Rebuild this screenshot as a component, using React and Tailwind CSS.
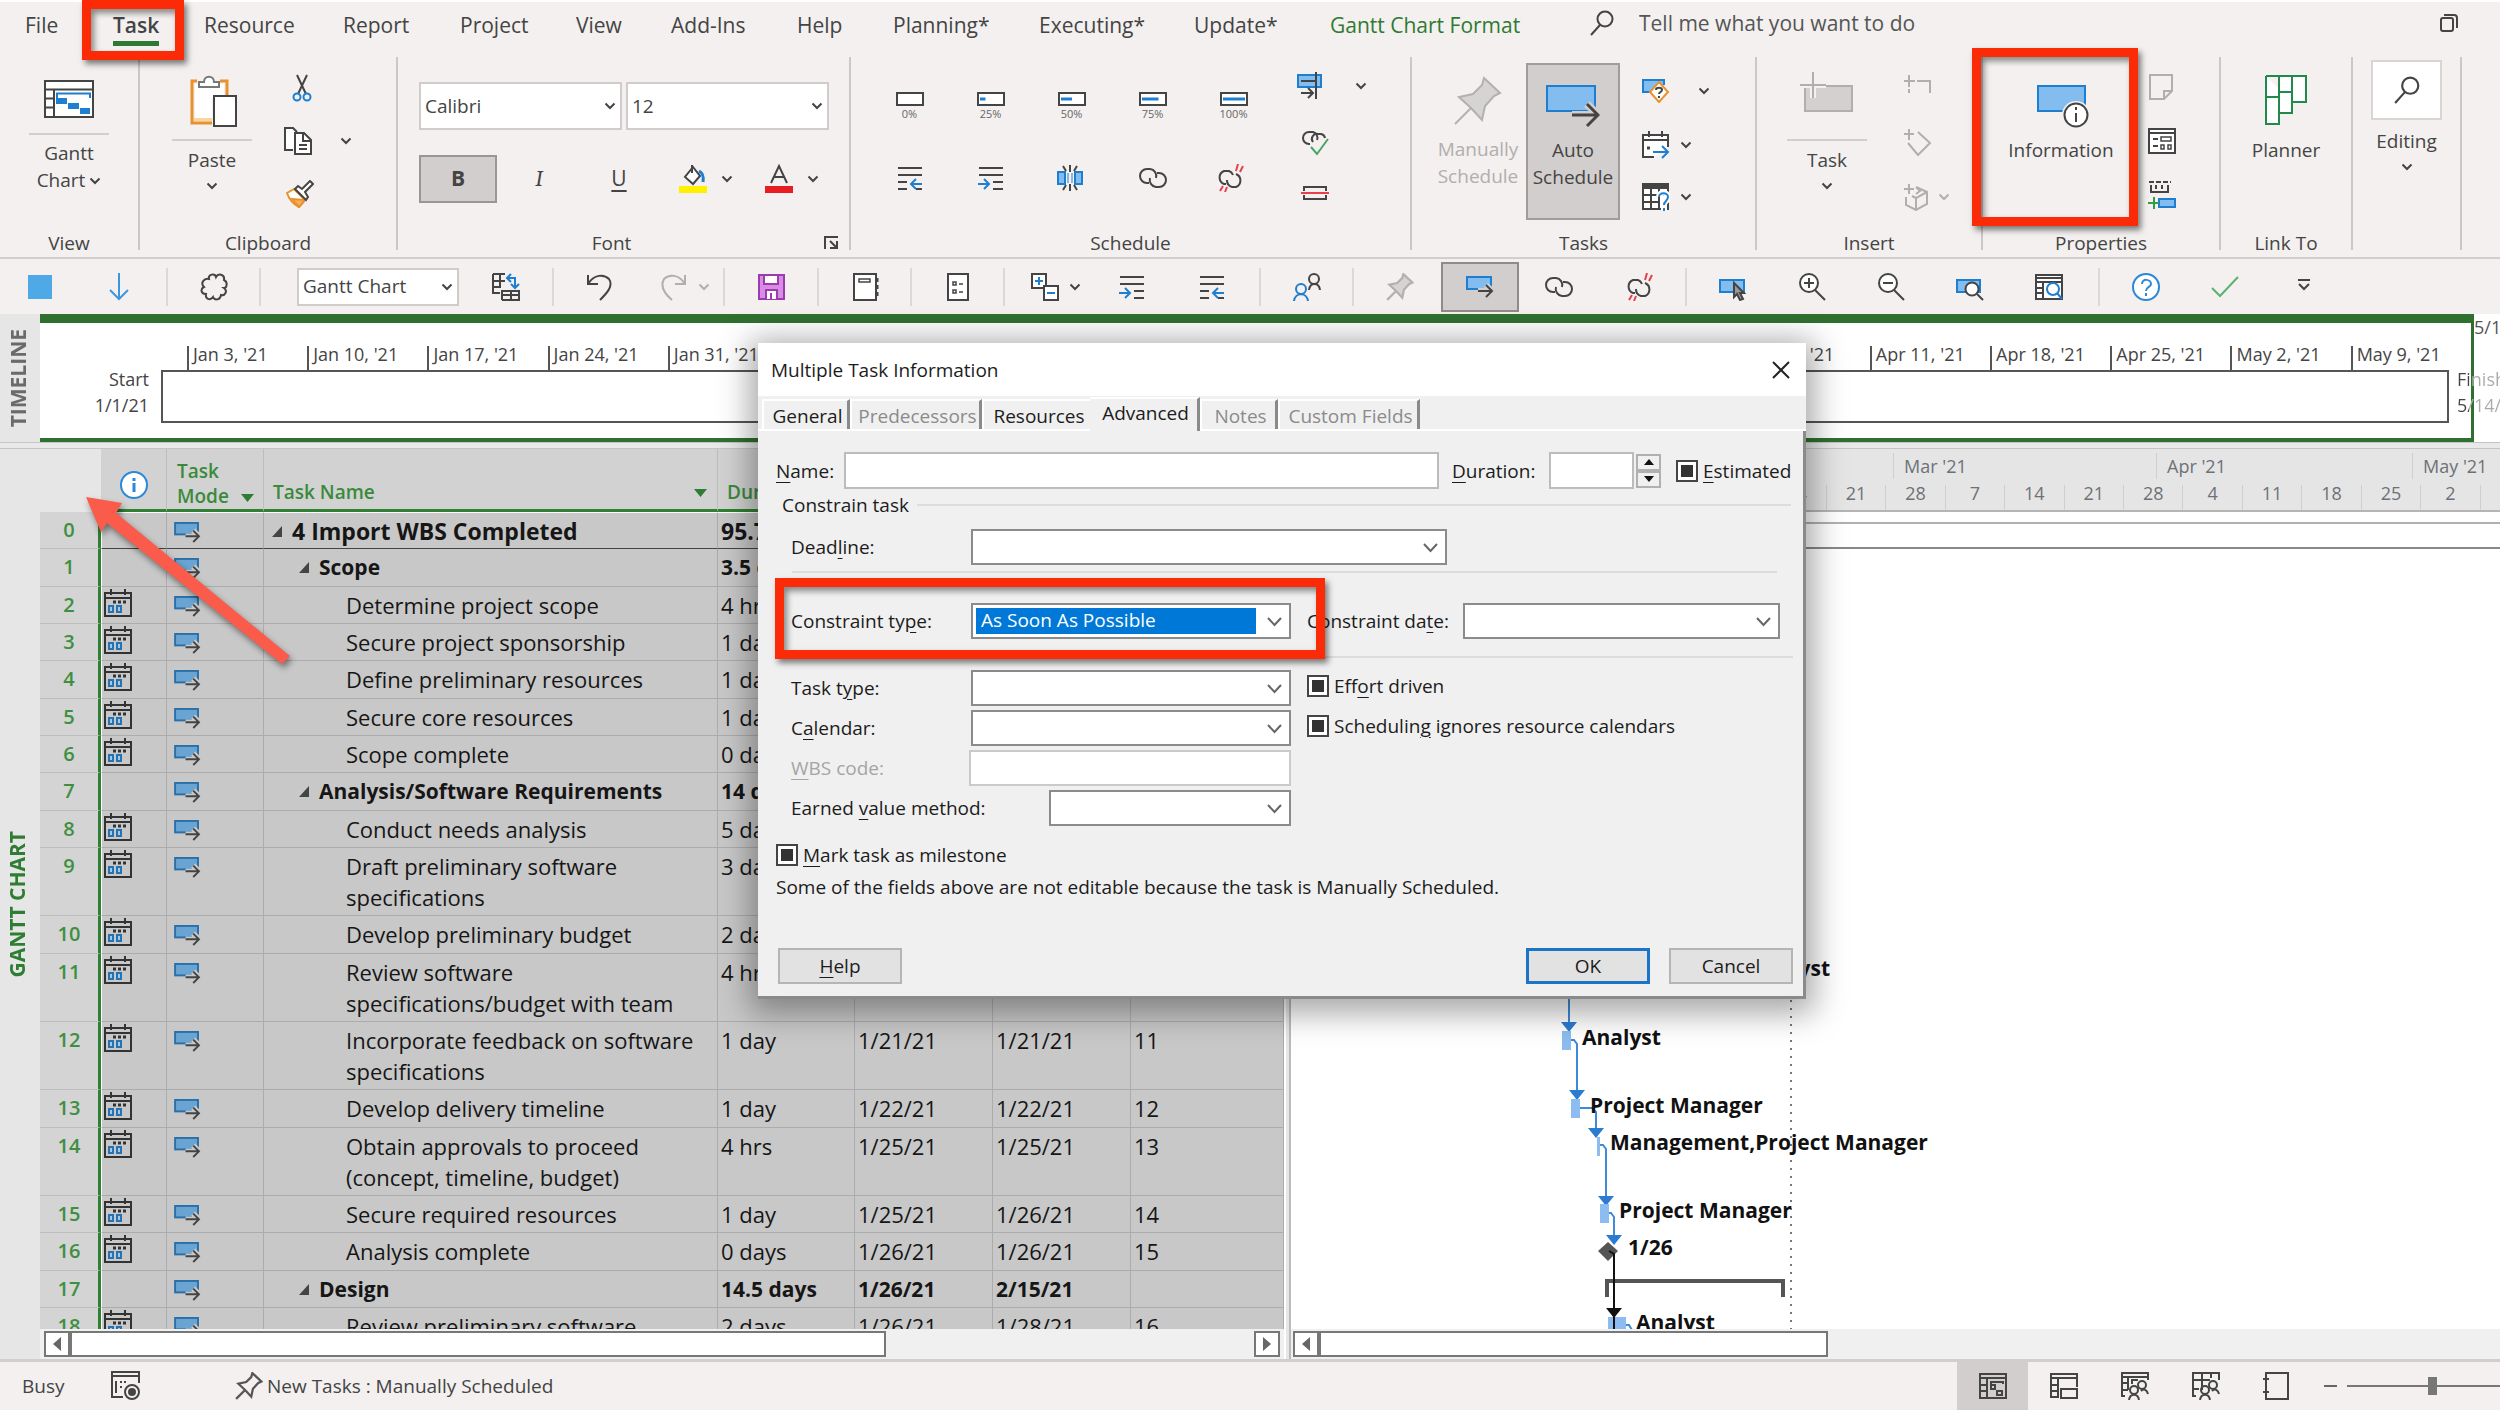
import React from "react";

const INK = "#444444";
const BLUE = "#1e7fd0";
const SKY = "#83bdf0";
const GREY = "#b1aead";

function Svg({ w = 28, h = 28, vb, children, stroke = INK, sw = 2, className = "" }) {
  return (
    <svg width={w} height={h} viewBox={vb || `0 0 ${w} ${h}`} fill="none" stroke={stroke} strokeWidth={sw} className={"shrink-0 " + className} aria-hidden="true">
      {children}
    </svg>
  );
}

const Chevron = ({ color = INK }) => (
  <Svg w={12} h={8} stroke={color} sw={2}><path d="M1.5 1.5 L6 6 L10.5 1.5" /></Svg>
);

/* ---------- ribbon icons ---------- */
const GanttIcon = () => (
  <Svg w={50} h={38}>
    <rect x="1" y="1" width="48" height="36" fill="#fff" />
    <path d="M1 9.500H49M10 10V37M1 18.500H10M1 27.500H10" />
    <path d="M13 18V13.500H46V18" stroke={BLUE} />
    <path d="M13 19h9v4h-9zM25 24h9v4h-9zM37 29h8v4h-8z" stroke={BLUE} fill={BLUE} />
  </Svg>
);
const PasteIcon = () => (
  <Svg w={48} h={52}>
    <path d="M7 6H2V48H22M30 6H37V20" stroke="#e8912d" strokeWidth="3" />
    <path d="M5 9V45H22V22H34V9Z" fill="#fff" stroke="none" />
    <path d="M4 43H22V46H4Z" fill="#fbd49b" stroke="none" />
    <path d="M9 12V7H14C14 0 24 0 24 7H29V12Z" fill="#fff" stroke="#777" />
    <rect x="24" y="21" width="22" height="30" fill="#fff" />
  </Svg>
);
const ScissorsIcon = () => (
  <Svg w={20} h={28}>
    <path d="M5 1L14 20M15 1L6 20" />
    <circle cx="5" cy="23" r="3.500" stroke={BLUE} /><circle cx="15" cy="23" r="3.500" stroke={BLUE} />
  </Svg>
);
const CopyIcon = () => (
  <Svg>
    <path d="M9 23H1V1H9L13 5" fill="#fff" />
    <path d="M11 6H20L27 13V27H11Z" fill="#fff" /><path d="M19 6V14H27M15 18H23M15 22H23" />
  </Svg>
);
const PainterIcon = () => (
  <Svg w={28} h={28}>
    <path d="M8 9L1 13C3 19 7 24 13 27L19 20Z" stroke="#e8912d" fill="#fff" />
    <path d="M6 19L19 20L13 27Z" fill="#f3b25f" stroke="#e8912d" />
    <path d="M9 9L20 20L22 17L19 12L27 4L24 1L16 9L12 6Z" fill="#fff" />
  </Svg>
);
const BucketIcon = () => (
  <Svg w={28} h={30}>
    <path d="M13 1V9M14 3L6 13L14 20L21 12Z" fill="#fff" /><path d="M20 7C24 9 25 12 24 18" stroke={BLUE} strokeWidth="3" />
    <rect x="0" y="22" width="28" height="7" fill="#fff000" stroke="none" />
  </Svg>
);
const FontColorIcon = () => (
  <Svg w={28} h={30}>
    <path d="M6 19L14 2L22 19M9 13H19" />
    <rect x="0" y="22" width="28" height="7" fill="#e81c23" stroke="none" />
  </Svg>
);
const LauncherIcon = () => (
  <Svg w={15} h={14} sw={2}><path d="M1 13V1H14M6 5L13 12M13 5V12H6" /></Svg>
);
const PercentIcon = ({ pct }) => (
  <Svg w={28} h={14}>
    <rect x="1" y="1" width="26" height="12" fill="#fff" />
    {pct > 0 && <path d={`M3 7H${3 + (22 * pct) / 100}`} stroke={BLUE} strokeWidth="3" />}
  </Svg>
);
const OutdentIcon = () => (
  <Svg w={26} h={26}>
    <path d="M1 3H25M1 10H25M1 17H10M1 24H10M19 24H25" strokeWidth="2" />
    <path d="M25 19H14M19 14L14 19L19 24" stroke={BLUE} />
  </Svg>
);
const IndentIcon = () => (
  <Svg w={26} h={26}>
    <path d="M1 3H25M1 10H25M15 17H25M15 24H25" />
    <path d="M0 19H11M6 14L11 19L6 24" stroke={BLUE} />
  </Svg>
);
const SplitIcon = () => (
  <Svg w={26} h={26}>
    <path d="M1 7H8V19H1ZM18 7H25V19H18Z" fill={SKY} stroke={BLUE} />
    <path d="M13 0V7M13 19V26M6 1L9 6M20 1L17 6M6 25L9 20M20 25L17 20" />
    <path d="M11 8V18M15 8V18" stroke={BLUE} strokeWidth="1" />
  </Svg>
);
const LinkIcon = () => (
  <Svg>
    <path d="M10 19H8A7 7 0 0 1 8 5H11A7 7 0 0 1 17 14" />
    <path d="M18 9H20A7 7 0 0 1 20 23H17A7 7 0 0 1 11 14" />
  </Svg>
);
const UnlinkIcon = () => (
  <Svg w={28} h={28}>
    <path d="M10 20H8A7 7 0 0 1 8 7H13A7 7 0 0 1 17 11" />
    <path d="M20 10A7 7 0 0 1 20 23H16A7 7 0 0 1 11 16" />
    <path d="M20 7L22 0M24 8L27 2M7 22L4 27M11 23L9 28" stroke="#e8404a" />
  </Svg>
);
const InspectLink = () => (
  <Svg w={28} h={26}>
    <path d="M9 14H8A6 6 0 0 1 8 2H12A6 6 0 0 1 16 10" /><path d="M12 12A5 5 0 0 1 17 4H20A5 5 0 0 1 24 8" />
    <path d="M10 17L16 24L27 9" stroke="#4aa564" strokeWidth="2" />
  </Svg>
);
const MarkTrack = () => (
  <Svg w={26} h={28}>
    <rect x="1" y="3" width="23" height="12" fill={SKY} stroke={BLUE} />
    <path d="M4 9H18M19 0V27M4 21H16M11 16L16 21L11 26" />
  </Svg>
);
const InactivateIcon = () => (
  <Svg w={28} h={14}>
    <path d="M3 5V1H25V5M3 9V13H25V9" /><path d="M0 7H28" stroke="#e8404a" />
  </Svg>
);
const PinIcon = ({ w = 50, h = 50, color = "#b3b0af", fill = "#d6d4d3" }) => (
  <Svg w={w} h={h} vb="0 0 50 50" stroke={color} sw={w > 40 ? 2 : 4}>
    <path d="M31 2L47 17L41 20L32 30L29 44L18 32L6 21L20 18L29 9Z" fill={fill} /><path d="M18 32L2 48" />
  </Svg>
);
const AutoIcon = () => (
  <Svg w={54} h={44}>
    <rect x="1" y="1" width="48" height="25" fill={SKY} stroke={BLUE} />
    <path d="M26 30H51M41 19L52 30L41 41" stroke="#d2cecd" strokeWidth="8" />
    <path d="M26 30H51M41 19L52 30L41 41" strokeWidth="3" />
  </Svg>
);
const AutoSmall = ({ w = 28, bg = "#d2cecd", fill = SKY, edge = BLUE }) => (
  <Svg w={w} h={w - 6} vb="0 0 28 22">
    <rect x="1" y="1" width="24" height="12" fill={fill} stroke={edge} />
    <path d="M12 15H26M20 9L26 15L20 21" stroke={bg} strokeWidth="6" />
    <path d="M12 15H26M20 9L26 15L20 21" />
  </Svg>
);
const InspectIcon = () => (
  <Svg w={28} h={24}>
    <path d="M22 6V1H1V13H10" fill={SKY} stroke={BLUE} />
    <path d="M17 3L26 13L17 23L8 13Z" fill="#fff" stroke="#e8912d" strokeWidth="2" />
    <path d="M14 11C14 8 20 8 20 11C20 13 17 13 17 15M17 17V19" />
  </Svg>
);
const MoveIcon = () => (
  <Svg w={28} h={28}>
    <path d="M12 26H1V4H26V16M1 9H26M7 0V6M20 0V6" fill="#fff" /><path d="M5 17H8" strokeWidth="3" />
    <path d="M11 21H26M20 15L26 21L20 27" stroke={BLUE} />
  </Svg>
);
const ModeIcon = () => (
  <Svg w={28} h={28}>
    <rect x="1" y="1" width="25" height="25" fill="#fff" /><path d="M1 3H26V5H1Z" />
    <path d="M1 12H26M1 19H18M9 6V26M17 6V26" />
    <path d="M17 14C17 8 26 9 26 14C26 18 22 18 22 22M22 25V28" stroke="#fff" strokeWidth="6" />
    <path d="M17 14C17 9 26 9 26 14C26 18 22 18 22 22M22 25V28" stroke={BLUE} />
  </Svg>
);
const InsertTaskIcon = () => (
  <Svg w={54} h={40} stroke={GREY}>
    <rect x="5" y="14" width="47" height="25" fill="#d3d0cf" />
    <path d="M13 0V26M0 13H26" stroke="#f3f0ef" strokeWidth="6" /><path d="M13 0V26M0 13H26" />
  </Svg>
);
const SummaryIcon = () => (<Svg w={28} h={20} stroke={GREY}><path d="M5 0V12M0 6H11M5 14V18M13 6H26V18" /></Svg>);
const MilestoneIcon = () => (<Svg w={28} h={28} stroke={GREY}><path d="M5 0V11M0 5H10M14 3L26 14L14 26L4 14" /></Svg>);
const DeliverableIcon = () => (<Svg w={28} h={28} stroke={GREY}><path d="M5 1V11M0 6H10M12 4L23 9V21L12 27L2 22V14M12 27V15L23 9M12 15L8 13M12 4L16 8L12 11" /></Svg>);
const InfoTaskIcon = () => (
  <Svg w={52} h={44}>
    <rect x="1" y="1" width="47" height="25" fill={SKY} stroke={BLUE} />
    <circle cx="39" cy="30" r="14" fill="#f3f0ef" stroke="none" />
    <circle cx="39" cy="30" r="11.500" fill="#fff" /><path d="M39 28V37M39 22V25" />
  </Svg>
);
const NoteIcon = () => (<Svg w={28} h={26} stroke={GREY}><path d="M2 1H24V17L16 25H2ZM24 17H16V25" /></Svg>);
const DetailsIcon = () => (<Svg w={28} h={26}><rect x="1" y="1" width="26" height="24" fill="#fff" /><path d="M1 5H27M5 11H10M5 18H10" /><path d="M13 9H23V13H13ZM13 17H16V21H13ZM20 17H23V21H20Z" strokeWidth="1.500" /></Svg>);
const AddTimelineIcon = () => (
  <Svg w={28} h={28}>
    <path d="M1 1H23" strokeDasharray="5 2" /><path d="M3 4V11H20V4M8 4V8M14 4V8" />
    <rect x="11" y="18" width="16" height="8" fill={SKY} stroke={BLUE} /><path d="M6 16V28M0 22H11" stroke="#2f9e44" />
  </Svg>
);
const PlannerIcon = () => (
  <Svg w={42} h={50} stroke="#1f8a4c">
    <path d="M1 1H41V27H27M1 1V49H14V1M14 17H27V38H14M27 1V38M1 22H14" fill="#fff" />
  </Svg>
);
const SearchIcon = ({ w = 26 }) => (
  <Svg w={w} h={w} vb="0 0 26 26"><circle cx="16" cy="9" r="7.500" /><path d="M11 15L2 25" /></Svg>
);

/* ---------- quick access icons ---------- */
const CloudIcon = () => (<Svg><path d="M9 6C8 1 15 0 16 4C18 0 25 1 24 7C28 9 27 15 24 15C28 18 25 23 21 22C20 28 14 27 13 24C10 28 5 26 6 21C1 21 0 16 4 14C0 10 4 5 9 6Z" strokeWidth="2" /></Svg>);
const ArrowDown = () => (<Svg stroke="#3b97dd"><path d="M14 0V26M5 17L14 26L23 17" strokeWidth="2" /></Svg>);
const SwitchIcon = () => (
  <Svg><path d="M1 1H13M1 1V20H8M1 8H13M1 14H9M8 1V14M10 27V18H27V27H10M19 17V27M10 22H27" />
    <path d="M16 5H23V14M19 1L15 5L19 9M19 11L23 15L27 11" stroke={BLUE} /></Svg>
);
const UndoIcon = () => (<Svg><path d="M2 2V11H12M2 11C8 1 18 1 23 6C28 13 20 21 14 27" /></Svg>);
const RedoIcon = () => (<Svg stroke={GREY}><path d="M25 2V11H15M25 11C19 1 9 1 4 6C0 13 5 21 12 27" /></Svg>);
const SaveIcon = () => (<Svg stroke="#9c3bad"><path d="M2 2H27V26H2Z" fill="#d98be6" /><rect x="7" y="2" width="14" height="9" fill="#fff" /><path d="M9 26V17H20V26M14 20V26" fill="#fff" /></Svg>);
const NotebookIcon = () => (<Svg><path d="M3 1H25V27H3Z" fill="#fff" /><path d="M8 6H19V9H8Z" strokeWidth="1.500" /><path d="M26 5V9M26 12V16M26 19V23" strokeWidth="3" /></Svg>);
const ListIcon = () => (<Svg><rect x="4" y="1" width="20" height="26" fill="#fff" /><path d="M9 9H12V12H9ZM9 17H12V20H9ZM15 11H19M15 19H19" strokeWidth="1.500" /></Svg>);
const OutlineIcon = () => (<Svg><rect x="1" y="1" width="14" height="14" fill="#fff" /><path d="M8 4V12M4 8H12" stroke={BLUE} /><rect x="13" y="13" width="14" height="14" fill="#fff" /><path d="M16 20H24" stroke={BLUE} /></Svg>);
const PeopleIcon = () => (
  <Svg><circle cx="21" cy="6" r="5" /><path d="M16 17C17 9 26 9 27 17" />
    <circle cx="8" cy="16" r="5" stroke={BLUE} /><path d="M1 28C2 19 14 19 15 28" stroke={BLUE} /></Svg>
);
const CursorIcon = () => (<Svg><path d="M1 7H25V19H1Z" fill={SKY} stroke={BLUE} /><path d="M15 10V24L18 21L21 27L24 26L21 20H25Z" fill="#999" /></Svg>);
const Zoomer = ({ plus }) => (<Svg><circle cx="11" cy="10" r="9" fill="#fff" /><path d={plus ? "M17 17L27 27M6 10H16M11 5V15" : "M17 17L27 27M6 10H16"} /></Svg>);
const ZoomTask = () => (<Svg><path d="M1 7H24V19H1Z" fill={SKY} stroke={BLUE} /><circle cx="16" cy="16" r="6.500" fill="#fff" /><path d="M21 21L27 27" /></Svg>);
const TableZoom = () => (<Svg><rect x="1" y="2" width="26" height="24" fill="#fff" /><path d="M1 5H27M1 9H27M8 9V26M1 15H8M1 20H8" /><circle cx="18" cy="16" r="6" stroke={BLUE} fill="#fff" /><path d="M22 20L27 26" stroke={BLUE} /></Svg>);
const HelpIcon = () => (<Svg stroke="#2b88d8"><circle cx="14" cy="14" r="13" fill="#fff" /><path d="M10 11C10 5 19 6 19 11C19 14 14 14 14 18M14 20V23" /></Svg>);
const CheckIcon = () => (<Svg stroke="#5cb270"><path d="M1 15L9 23L27 4" strokeWidth="2" /></Svg>);
const MoreIcon = () => (<Svg><path d="M8 7H20M9 11L14 16L19 11" /></Svg>);

/* ---------- grid icons ---------- */
const CalendarIcon = () => (
  <Svg w={28} h={28} stroke="#333">
    <path d="M1 4H27V27H1ZM1 9H27M7 0V6M21 0V6" />
    <path d="M9 13H12M14 13H17M19 13H22" strokeWidth="3" />
    <path d="M5 17H9V23H5ZM13 17H17V23H13Z" stroke="#2474b5" fill="#a9c6dc" />
  </Svg>
);

const tabs = [
  ["File", "w-[88px]"], ["Task", "w-[91px]"], ["Resource", "w-[139px]"], ["Report", "w-[117px]"],
  ["Project", "w-[116px]"], ["View", "w-[95px]"], ["Add-Ins", "w-[126px]"], ["Help", "w-[96px]"],
  ["Planning*", "w-[146px]"], ["Executing*", "w-[155px]"], ["Update*", "w-[136px]"], ["Gantt Chart Format", "w-[259px]"],
];

function Tabs() {
  return (
    <nav className="flex h-[57px] shrink-0 items-start border-t-2 border-white pt-2 pl-[25px] text-[21px] leading-[30px]">
      {tabs.map(([t, w]) => (
        <button key={t} type="button" className={`${w} shrink-0 text-left whitespace-nowrap ${t === "Gantt Chart Format" ? "text-[#2f7a32]" : ""}`}>
          {t === "Task" ? <span className="inline-block border-b-[5px] border-[#2f7a32] leading-[31px] font-semibold">{t}</span> : t}
        </button>
      ))}
      <label className="-mt-0.5 flex items-center gap-6">
        <SearchIcon />
        <input type="text" placeholder="Tell me what you want to do" aria-label="Tell me what you want to do" className="w-80 bg-transparent outline-none placeholder:text-[#555] placeholder:opacity-100" />
      </label>
      <button type="button" aria-label="Restore" className="mt-1 mr-[42px] ml-auto">
        <Svg w={18} h={18}><rect x="1" y="4" width="12" height="13" rx="2" /><path d="M4 1H14Q17 1 17 4V14" /></Svg>
      </button>
    </nav>
  );
}

function Group({ label, w, children, extra }) {
  return (
    <section className={`${w} relative flex h-[193px] shrink-0 flex-col border-r-2 border-[#cbc8c7]`}>
      <div className="flex h-[172px] shrink-0 items-start">{children}</div>
      {label && <h2 className={`mt-auto h-3 text-center leading-[11px] ${extra ? "pr-6" : ""}`}>{label}</h2>}
      {extra}
    </section>
  );
}

function Combo({ value, className, pad = "pl-1", label }) {
  return (
    <span className={`relative flex border-2 border-[#cfcccb] bg-white ${className}`}>
      <select aria-label={label} className={`h-full w-full appearance-none bg-transparent outline-none ${pad}`}><option>{value}</option></select>
      <span className="pointer-events-none absolute inset-y-0 right-1 flex items-center"><Chevron /></span>
    </span>
  );
}

const Cell = ({ children, label, className = "" }) => (
  <button type="button" aria-label={label} className={`flex items-center justify-center ${className}`}>{children}</button>
);

function Ribbon() {
  return (
    <div className="flex h-[202px] shrink-0 border-b-2 border-[#d1cecd]">
      <Group label="View" w="w-[140px]">
        <button type="button" className="mx-auto flex w-20 flex-col items-center pt-[23px]">
          <GanttIcon />
          <span className="mt-[15px] mb-[5px] h-0.5 w-full bg-[#d1cecd]" />
          <span className="leading-[27px]">Gantt</span>
          <span className="flex items-center gap-1 leading-[27px]">Chart <Chevron /></span>
        </button>
      </Group>
      <Group label="Clipboard" w="w-[258px]">
        <button type="button" className="ml-8 flex w-20 flex-col items-center pt-[18px]">
          <span className="pl-1"><PasteIcon /></span>
          <span className="mt-3 mb-1.5 h-0.5 w-full bg-[#d1cecd]" />
          <span className="leading-[27px]">Paste</span>
          <span className="mt-2"><Chevron /></span>
        </button>
        <div className="ml-8 grid grid-cols-[28px_28px] items-center gap-x-5 gap-y-[25px] pt-[17px]">
          <Cell label="Cut" className="h-7 pl-2"><ScissorsIcon /></Cell><span />
          <Cell label="Copy"><CopyIcon /></Cell><Cell label="Copy options" className="h-7"><Chevron /></Cell>
          <Cell label="Format Painter" className="pl-1"><PainterIcon /></Cell>
        </div>
      </Group>
      <Group label="Font" w="w-[453px]" extra={<button type="button" aria-label="Font settings" className="absolute right-2.5 bottom-0"><LauncherIcon /></button>}>
        <div className="flex flex-col gap-[25px] pt-[25px] pl-[21px]">
          <div className="flex gap-1">
            <Combo value="Calibri" label="Font" className="h-12 w-[203px]" />
            <Combo value="12" label="Font size" className="h-12 w-[203px]" />
          </div>
          <div className="flex items-center">
            <button type="button" className="h-12 w-[78px] border-2 border-[#9a9695] bg-[#d2cecd] text-[21px] font-bold">B</button>
            <button type="button" className="w-[84px] font-serif text-[23px] italic">I</button>
            <button type="button" className="w-[76px] text-[21px] underline underline-offset-4">U</button>
            <Cell label="Highlight" className="ml-[22px] gap-3.5"><BucketIcon /><Chevron /></Cell>
            <Cell label="Font colour" className="ml-8 gap-3.5"><FontColorIcon /><Chevron /></Cell>
          </div>
        </div>
      </Group>
      <Group label="Schedule" w="w-[561px]">
        <div className="grid grid-cols-[repeat(5,81px)] pt-[35px] pl-[18px]">
          {[0, 25, 50, 75, 100].map((p) => (
            <button key={p} type="button" className="flex h-[72px] flex-col items-center text-[11px] leading-4 text-[#666]"><PercentIcon pct={p} />{p}%</button>
          ))}
          <Cell label="Outdent"><OutdentIcon /></Cell><Cell label="Indent"><IndentIcon /></Cell><Cell label="Split task" className="pr-1"><SplitIcon /></Cell><Cell label="Link tasks"><LinkIcon /></Cell><Cell label="Unlink tasks" className="pr-2"><UnlinkIcon /></Cell>
        </div>
        <div className="ml-[23px] flex flex-col items-start pt-[15px]">
          <Cell label="Mark on track" className="gap-8"><MarkTrack /><Chevron /></Cell>
          <Cell label="Respect links" className="mt-[30px] pl-1"><InspectLink /></Cell>
          <Cell label="Inactivate" className="mt-[30px] pl-1"><InactivateIcon /></Cell>
        </div>
      </Group>
      <Group label="Tasks" w="w-[345px]">
        <button type="button" className="ml-[18px] flex w-24 flex-col items-center pt-[19px] text-[#b1aead]">
          <PinIcon />
          <span className="mt-2.5 leading-[27px]">Manually</span><span className="leading-[27px]">Schedule</span>
        </button>
        <button type="button" className="mt-1.5 flex h-[157px] w-[94px] flex-col items-center border-2 border-[#a09c9b] bg-[#d2cecd] pt-5">
          <AutoIcon />
          <span className="mt-2 leading-[27px]">Auto</span><span className="leading-[27px]">Schedule</span>
        </button>
        <div className="ml-[22px] flex flex-col items-start pt-[22px]">
          <Cell label="Inspect" className="h-6 gap-7"><InspectIcon /><Chevron /></Cell>
          <Cell label="Move" className="mt-7 h-7 gap-2.5"><MoveIcon /><Chevron /></Cell>
          <Cell label="Mode" className="mt-6 h-7 gap-2.5"><ModeIcon /><Chevron /></Cell>
        </div>
      </Group>
      <Group label="Insert" w="w-[226px]">
        <button type="button" className="ml-[30px] flex w-20 flex-col items-center pt-[15px]">
          <InsertTaskIcon />
          <span className="mt-[27px] mb-1.5 h-0.5 w-full bg-[#d1cecd]" />
          <span className="leading-[27px]">Task</span>
          <span className="mt-2"><Chevron /></span>
        </button>
        <div className="ml-[37px] flex flex-col items-start pt-[18px]">
          <Cell label="Summary"><SummaryIcon /></Cell>
          <Cell label="Milestone" className="mt-[34px]"><MilestoneIcon /></Cell>
          <Cell label="Deliverable" className="mt-[26px] gap-1.5"><DeliverableIcon /><Chevron color={GREY} /></Cell>
        </div>
      </Group>
      <Group label="Properties" w="w-[238px]">
        <button type="button" className="ml-[18px] flex w-[120px] flex-col items-center pt-7">
          <span className="pl-1"><InfoTaskIcon /></span>
          <span className="mt-2 leading-[27px]">Information</span>
        </button>
        <div className="ml-[27px] flex flex-col items-start pt-[17px]">
          <Cell label="Notes"><NoteIcon /></Cell>
          <Cell label="Details" className="mt-7"><DetailsIcon /></Cell>
          <Cell label="Add to timeline" className="mt-[27px]"><AddTimelineIcon /></Cell>
        </div>
      </Group>
      <Group label="Link To" w="w-[132px]">
        <button type="button" className="mx-auto flex flex-col items-center pt-[18px]">
          <PlannerIcon />
          <span className="mt-3 leading-[27px]">Planner</span>
        </button>
      </Group>
      <Group w="w-[109px]">
        <button type="button" className="mx-auto flex flex-col items-center pt-[3px]">
          <span className="flex h-[60px] w-[71px] items-center justify-center border-2 border-[#d8d5d4] bg-white"><SearchIcon w={28} /></span>
          <span className="mt-2 leading-[27px]">Editing</span>
          <span className="mt-2"><Chevron /></span>
        </button>
      </Group>
    </div>
  );
}

const QGroup = ({ className, children }) => (
  <div className={`flex h-[38px] items-center border-r-2 border-[#dbd8d7] ${className}`}>{children}</div>
);
function QuickBar() {
  return (
    <div className="flex h-[55px] shrink-0 items-center">
      <QGroup className="w-[168px] gap-[51px] pl-[26px]"><span className="h-6 w-7 px-0.5"><span className="block h-6 w-6 bg-[#4fa9e6]" /></span><Cell label="Move down"><ArrowDown /></Cell></QGroup>
      <QGroup className="w-[93px] justify-center"><Cell label="Shape"><CloudIcon /></Cell></QGroup>
      <QGroup className="w-[293px] gap-[33px] pl-9"><Combo value="Gantt Chart" label="View" className="h-[38px] w-[162px]" /><Cell label="Switch table"><SwitchIcon /></Cell></QGroup>
      <QGroup className="w-[171px] pl-8"><Cell label="Undo"><UndoIcon /></Cell><Cell label="Redo" className="ml-[46px] gap-2.5"><RedoIcon /><Chevron color={GREY} /></Cell></QGroup>
      <QGroup className="w-[94px] justify-center"><Cell label="Save"><SaveIcon /></Cell></QGroup>
      <QGroup className="w-[93px] justify-center"><Cell label="Notebook"><NotebookIcon /></Cell></QGroup>
      <QGroup className="w-[93px] justify-center"><Cell label="List"><ListIcon /></Cell></QGroup>
      <QGroup className="w-64 pl-[26px]"><Cell label="Outline" className="gap-2.5"><OutlineIcon /><Chevron /></Cell><Cell label="Indent" className="ml-[38px]"><IndentIcon /></Cell><Cell label="Outdent" className="ml-[54px]"><OutdentIcon /></Cell></QGroup>
      <QGroup className="w-[93px] justify-center"><Cell label="Resources"><PeopleIcon /></Cell></QGroup>
      <QGroup className="w-[333px] pl-8"><Cell label="Manual"><PinIcon w={28} h={28} /></Cell>
        <Cell label="Auto schedule" className="ml-[27px] h-[50px] w-[78px] border-2 border-[#8f8b8a] bg-[#d2cecd]"><AutoSmall /></Cell>
        <Cell label="Link" className="ml-[26px]"><LinkIcon /></Cell><Cell label="Unlink" className="ml-[52px]"><UnlinkIcon /></Cell></QGroup>
      <QGroup className="w-[413px] gap-[51px] pl-8"><Cell label="Select"><CursorIcon /></Cell><Cell label="Zoom in"><Zoomer plus /></Cell><Cell label="Zoom out"><Zoomer /></Cell><Cell label="Zoom task"><ZoomTask /></Cell><Cell label="Zoom table"><TableZoom /></Cell></QGroup>
      <div className="flex items-center gap-[51px] pl-8"><Cell label="Help"><HelpIcon /></Cell><Cell label="Accept"><CheckIcon /></Cell><Cell label="More"><MoreIcon /></Cell></div>
    </div>
  );
}

const weeks = ["Jan 3, '21", "Jan 10, '21", "Jan 17, '21", "Jan 24, '21", "Jan 31, '21", "Feb 7, '21", "Feb 14, '21", "Feb 21, '21", "Feb 28, '21", "Mar 7, '21", "Mar 14, '21", "Mar 21, '21", "Mar 28, '21", "Apr 4, '21", "Apr 11, '21", "Apr 18, '21", "Apr 25, '21", "May 2, '21", "May 9, '21"];

const SideLabel = ({ children, className }) => (
  <div className={`flex w-10 shrink-0 items-center justify-center bg-[#e6e6e6] pr-1 ${className}`}>
    <span className="rotate-180 text-[21px] font-bold whitespace-nowrap [writing-mode:vertical-rl]">{children}</span>
  </div>
);

function Timeline() {
  return (
    <section className="flex h-32 shrink-0 overflow-hidden text-[18px] leading-[26px] text-[#444]">
      <SideLabel className="text-[#6a6a6a]">TIMELINE</SideLabel>
      <div className="min-w-0 flex-1 border-t-[9px] border-r-[3px] border-b-4 border-[#2f7030] bg-white">
        <div className="ml-[147px] flex pt-[23px]">
          {weeks.map((w) => (
            <div key={w} className="h-6 min-w-0 flex-1 border-l-2 border-[#555] pl-1 leading-[17px] whitespace-nowrap">{w}</div>
          ))}
        </div>
        <div className="flex">
          <div className="-mt-1 w-[121px] shrink-0 pr-3 text-right">Start<br />1/1/21</div>
          <div className="h-[53px] flex-1 border-2 border-[#555]" />
          <div className="relative z-10 -mt-1 h-[52px] w-[22px] shrink-0 pl-2 whitespace-nowrap">
            <span className="block w-[60px] bg-[linear-gradient(90deg,#444_12px,#aaa_12px)] bg-clip-text text-transparent">Finish<br />5/14/21</span>
          </div>
        </div>
      </div>
      <div className="w-[26px] shrink-0 overflow-hidden bg-white whitespace-nowrap text-[#555]">5/14</div>
    </section>
  );
}

const rows = [
  { n: 0, lvl: 0, t: "4 Import WBS Completed", d: "95.75 days" },
  { n: 1, lvl: 1, t: "Scope", d: "3.5 days" },
  { n: 2, t: "Determine project scope", d: "4 hrs" },
  { n: 3, t: "Secure project sponsorship", d: "1 day" },
  { n: 4, t: "Define preliminary resources", d: "1 day" },
  { n: 5, t: "Secure core resources", d: "1 day" },
  { n: 6, t: "Scope complete", d: "0 days" },
  { n: 7, lvl: 1, t: "Analysis/Software Requirements", d: "14 days" },
  { n: 8, t: "Conduct needs analysis", d: "5 days" },
  { n: 9, t: "Draft preliminary software", t2: "specifications", d: "3 days" },
  { n: 10, t: "Develop preliminary budget", d: "2 days" },
  { n: 11, t: "Review software", t2: "specifications/budget with team", d: "4 hrs" },
  { n: 12, t: "Incorporate feedback on software", t2: "specifications", d: "1 day", s: "1/21/21", f: "1/21/21", p: "11" },
  { n: 13, t: "Develop delivery timeline", d: "1 day", s: "1/22/21", f: "1/22/21", p: "12" },
  { n: 14, t: "Obtain approvals to proceed", t2: "(concept, timeline, budget)", d: "4 hrs", s: "1/25/21", f: "1/25/21", p: "13" },
  { n: 15, t: "Secure required resources", d: "1 day", s: "1/25/21", f: "1/26/21", p: "14" },
  { n: 16, t: "Analysis complete", d: "0 days", s: "1/26/21", f: "1/26/21", p: "15" },
  { n: 17, lvl: 1, t: "Design", d: "14.5 days", s: "1/26/21", f: "2/15/21", p: "" },
  { n: 18, t: "Review preliminary software", t2: "specifications", d: "2 days", s: "1/26/21", f: "1/28/21", p: "16" },
];

const Caret = () => (<Svg w={13} h={8} stroke="none"><path d="M0 0H13L6.500 8Z" fill="#2f7d32" /></Svg>);
const Tri = () => (<Svg w={10} h={11} stroke="none"><path d="M0 11L10 0V11Z" fill="#444" /></Svg>);

function TaskTable() {
  const th = "border-r border-b-[3px] border-r-[#bdbdbd] border-b-[#2f8032] bg-[#d2d2d2] p-0 text-left align-bottom font-semibold";
  return (
    <table className="w-[1244px] table-fixed border-separate border-spacing-0 text-[22px] leading-[31px] text-[#161616]">
      <colgroup>
        <col className="w-[61px]" /><col className="w-[66px]" /><col className="w-[97px]" /><col className="w-[454px]" /><col className="w-[137px]" /><col className="w-[138px]" /><col className="w-[138px]" /><col className="w-[153px]" />
      </colgroup>
      <thead className="text-[19px] leading-[25px] text-[#3a8a3c]">
        <tr>
          <th className="h-[63px] bg-[#e6e6e6] p-0" />
          <th className={th}>
            <span className="flex justify-center pb-2.5"><Svg w={28} h={28} stroke="#2b88d8"><circle cx="14" cy="14" r="13" fill="#fff" /><path d="M14 12V21M14 7V10" strokeWidth="3" /></Svg></span>
          </th>
          <th className={th}><span className="flex items-end gap-3 pl-2.5">Task<br />Mode<span className="pb-[7px]"><Caret /></span></span></th>
          <th className={th}><span className="flex items-center justify-between pr-2.5 pb-1 pl-[9px]">Task Name<Caret /></span></th>
          <th className={th}><span className="flex pb-1 pl-[9px]">Duration</span></th>
          <th className={th}><span className="flex pb-1 pl-[9px]">Start</span></th>
          <th className={th}><span className="flex pb-1 pl-[9px]">Finish</span></th>
          <th className={th}><span className="flex pb-1 pl-[9px]">Predecessors</span></th>
        </tr>
      </thead>
      <tbody>
        {rows.map((r, i) => {
          const h = r.t2 ? "h-[68px]" : i % 3 === 1 ? "h-[38px]" : "h-[37px]";
          const bold = r.lvl !== undefined;
          const td = `border-r border-b border-r-[#acacac] bg-[#c8c8c8] p-0 align-top ${i === 0 ? "border-t border-t-white border-b-[#444]" : "border-b-[#acacac]"}`;
          const txt = `${td} pt-[3px] pl-[3px] ${r.lvl === 0 ? "text-[23px] font-bold" : bold ? "text-[21px] font-bold" : ""}`;
          return (
            <tr key={r.n}>
              <td className={`${h} border-r-[3px] border-b border-r-[#2f8032] border-b-[#bdbdbd] bg-[#d4d4d4] p-0 pt-0.5 pr-1 pl-1 align-top text-center text-xl leading-[31px] font-semibold text-[#3f8f41]`}>{r.n}</td>
              <td className={`${td} border-l border-l-white pt-0.5 pl-0.5`}>{!bold && <CalendarIcon />}</td>
              <td className={`${td} pt-[9px] pl-[7px]`}><AutoSmall w={27} bg="#c8c8c8" fill="#69a4d2" edge="#2a6fa8" /></td>
              <td className={txt}>
                <span className={`flex items-center gap-2.5 whitespace-nowrap ${r.lvl === 0 ? "pl-[5px]" : r.lvl === 1 ? "pl-8" : "pl-[79px]"}`}>
                  {bold && <Tri />}<span>{r.t}{r.t2 && <><br />{r.t2}</>}</span>
                </span>
              </td>
              <td className={`${txt} whitespace-nowrap`}>{r.d}</td><td className={txt}>{r.s}</td><td className={txt}>{r.f}</td><td className={txt}>{r.p}</td>
            </tr>
          );
        })}
      </tbody>
    </table>
  );
}

function ScrollButton({ left, label }) {
  return (
    <button type="button" aria-label={label} className="flex h-[26px] w-[26px] shrink-0 items-center justify-center border-2 border-[#777] bg-white">
      <Svg w={8} h={14} stroke="none"><path d={left ? "M8 0V14L0 7Z" : "M0 0V14L8 7Z"} fill="#666" /></Svg>
    </button>
  );
}

const months = [["", "w-[101px]"], ["Jan '21", "w-[263px]"], ["Feb '21", "w-[238px]"], ["Mar '21", "w-[263px]"], ["Apr '21", "w-64"], ["May '21", "w-[263px]"]];
const days = [20, 27, 3, 10, 17, 24, 31, 7, 14, 21, 28, 7, 14, 21, 28, 4, 11, 18, 25, 2, 9];

const Down = ({ x, y, fill = "#2b7bd0" }) => <path d={`M${x - 8} ${y}H${x + 8}L${x} ${y + 10}Z`} fill={fill} />;
const Bar = ({ x, y, w = 9, h = 19 }) => <rect x={x} y={y} width={w} height={h} fill="#8cbcf0" />;

function GanttChart() {
  return (
    <svg width="1209" height="781" viewBox="1291 549 1209 781" className="block shrink-0" role="img" aria-label="Gantt bars">
      <path d="M1791 560V1330" stroke="#777" strokeWidth="2" strokeDasharray="2 6" />
      <g fill="none" stroke="#3e8ad8" strokeWidth="2">
        <path d="M1569 980V1024" />
        <path d="M1571 1040H1574L1577 1044V1092" />
        <path d="M1579 1108H1592L1596 1112V1129" />
        <path d="M1600 1145H1603L1606 1149V1198" />
        <path d="M1608 1213H1611L1614 1217V1237" />
        <path d="M1626 1325H1629L1632 1330" />
      </g>
      <Down x={1569} y={1022} /><Down x={1577} y={1090} /><Down x={1596} y={1128} /><Down x={1606} y={1196} /><Down x={1614} y={1235} />
      <Bar x={1562} y={1031} /><Bar x={1571} y={1099} /><Bar x={1597} y={1137} w={3} /><Bar x={1600} y={1204} /><Bar x={1608} y={1317} w={18} />
      <path d="M1608 1242L1618 1251L1608 1261L1598 1251Z" fill="#555" />
      <path d="M1607 1297V1281H1783V1297" fill="none" stroke="#555" strokeWidth="4" />
      <path d="M1609 1251L1614 1254V1330" fill="none" stroke="#111" strokeWidth="2" />
      <Down x={1614} y={1308} fill="#111" />
      <g fill="#111" className="text-[21px] font-bold">
        <text x="1830" y="976" textAnchor="end">Analyst</text>
        <text x="1582" y="1045">Analyst</text>
        <text x="1590" y="1113">Project Manager</text>
        <text x="1610" y="1150">Management,Project Manager</text>
        <text x="1619" y="1218">Project Manager</text>
        <text x="1628" y="1255">1/26</text>
        <text x="1636" y="1330">Analyst</text>
      </g>
    </svg>
  );
}

function ChartPane() {
  return (
    <div className="flex min-w-0 flex-1 flex-col overflow-hidden bg-white">
      <div className="h-[63px] shrink-0 border-b-2 border-[#b5b5b5] bg-[#e5e5e5] text-[18px] text-[#6d7177]">
        <div className="flex pt-1">
          {months.map(([m, w], i) => <div key={i} className={`${w} h-[26px] shrink-0 border-l border-[#cfcfcf] pl-2.5 leading-[26px]`}>{m}</div>)}
        </div>
        <div className="grid w-[1248px] grid-cols-[repeat(21,minmax(0,1fr))] pt-1.5">
          {days.map((d, i) => <div key={i} className="h-[25px] border-l border-[#cfcfcf] text-center leading-4">{d}</div>)}
        </div>
      </div>
      <div className="mt-2.5 h-[27px] shrink-0 border-t-2 border-b-2 border-t-[#b0b0b0] border-b-[#888]" />
      <div className="min-h-0 flex-1 overflow-hidden"><GanttChart /></div>
      <div className="flex h-[30px] shrink-0 items-center bg-[#f0f0f0] pl-0.5">
        <ScrollButton left label="Scroll chart left" />
        <span className="h-[26px] w-[509px] border-2 border-[#777] bg-white" />
      </div>
    </div>
  );
}

/* ---------- dialog ---------- */
const U = ({ children }) => <span className="underline underline-offset-4">{children}</span>;

function Drop({ id, className, children, value }) {
  return (
    <span className={`relative flex h-9 border-2 border-[#8b8b8b] bg-white ${className}`}>
      <select id={id} className="peer sr-only"><option>{value || ""}</option></select>
      {children}
      <span className="pointer-events-none absolute inset-y-0 right-[7px] flex items-center pt-0.5"><Svg w={15} h={10} stroke="#666"><path d="M1 1L7.500 8L14 1" /></Svg></span>
    </span>
  );
}
const Check = ({ id, children }) => (
  <span className="flex h-6 items-center gap-[5px]">
    <input id={id} type="checkbox" className="size-[22px] appearance-none border-2 border-[#444] bg-[#333] shadow-[inset_0_0_0_3px_white]" />
    <label htmlFor={id}>{children}</label>
  </span>
);

function Dialog() {
  const tab = "flex h-[30px] items-center justify-center border-t-2 border-l-2 border-white pt-0.5 pl-1";
  const dark = "border-r-[3px] border-r-[#8a8a8a]";
  return (
    <div role="dialog" aria-label="Multiple Task Information" className="absolute top-[343px] left-[758px] flex w-[1048px] flex-col border-b-[3px] border-[#8a8a8a] bg-[#f0f0f0] text-[19px] leading-6 text-[#1c1c1c] shadow-[0_6px_30px_8px_rgba(0,0,0,0.35)]">
      <div className="flex h-[53px] items-center justify-between bg-white pr-4 pl-[13px]">
        <h2>Multiple Task Information</h2>
        <button type="button" aria-label="Close"><Svg w={18} h={18} stroke="#222"><path d="M1 1L17 17M17 1L1 17" /></Svg></button>
      </div>
      <div role="tablist" className="flex h-[35px] items-end border-b-2 border-white pl-1">
        <button type="button" role="tab" className={`${tab} ${dark} w-[88px]`}>General</button>
        <button type="button" role="tab" className={`${tab} ${dark} w-[132px] text-[#8b8b8b]`}>Predecessors</button>
        <button type="button" role="tab" className={`${tab} w-[108px]`}>Resources</button>
        <button type="button" role="tab" className={`-mb-0.5 flex h-[34px] w-[110px] items-center justify-center border-t-2 border-white bg-[#f0f0f0] pb-1 pl-1 ${dark}`}>Advanced</button>
        <button type="button" role="tab" className={`${tab} ${dark} w-[78px] text-[#8b8b8b]`}>Notes</button>
        <button type="button" role="tab" className={`${tab} ${dark} w-[142px] text-[#8b8b8b]`}>Custom Fields</button>
      </div>
      <div className="flex flex-col border-r-[3px] border-[#8a8a8a] pt-[21px] pr-2.5 pb-3 pl-[18px]">
        <div className="flex h-[37px] items-center">
          <label htmlFor="name" className="w-[68px]"><U>N</U>ame:</label>
          <input id="name" type="text" className="h-full w-[595px] border-2 border-[#bcbcbc] bg-white" />
          <label htmlFor="duration" className="ml-[13px] w-[97px]"><U>D</U>uration:</label>
          <input id="duration" type="text" className="h-full w-[85px] border-2 border-[#bcbcbc] bg-white" />
          <span className="mr-[15px] ml-0.5 flex flex-col">
            <button type="button" aria-label="Increase duration" className="flex h-[17px] w-[25px] items-center justify-center border-2 border-[#b0b0b0]"><Svg w={10} h={6} stroke="none"><path d="M0 6H10L5 0Z" fill="#111" /></Svg></button>
            <button type="button" aria-label="Decrease duration" className="flex h-[17px] w-[25px] items-center justify-center border-2 border-[#b0b0b0]"><Svg w={10} h={6} stroke="none"><path d="M0 0H10L5 6Z" fill="#111" /></Svg></button>
          </span>
          <Check id="estimated"><U>E</U>stimated</Check>
        </div>
        <div className="flex h-8 items-center gap-2 pr-0.5 pl-1.5">Constrain task<span className="h-0.5 flex-1 bg-[#dcdcdc]" /></div>
        <div className="mt-2 flex items-center pl-[15px]">
          <label htmlFor="deadline" className="w-[180px]">Dead<U>l</U>ine:</label>
          <Drop id="deadline" className="w-[476px]" />
        </div>
        <span className="mt-1.5 mr-4 ml-4 h-0.5 bg-[#dcdcdc]" />
        <div className="mt-[30px] flex items-center pl-[15px]">
          <label htmlFor="ctype" className="w-[180px]">Constraint ty<U>p</U>e:</label>
          <Drop id="ctype" className="w-80" value="As Soon As Possible">
            <span className="m-[3px] mr-[33px] flex-1 bg-[#0078d7] pl-[5px] text-white">As Soon As Possible</span>
          </Drop>
          <label htmlFor="cdate" className="ml-4 w-[156px]">Constraint da<U>t</U>e:</label>
          <Drop id="cdate" className="w-[317px]" />
        </div>
        <span className="mt-[17px] h-0.5 bg-[#dcdcdc]" />
        <div className="mt-3 flex gap-4 pl-[15px]">
          <div className="flex w-[500px] flex-col gap-1">
            <div className="flex items-center justify-between"><label htmlFor="ttype">Task t<U>y</U>pe:</label><Drop id="ttype" className="w-80" /></div>
            <div className="flex items-center justify-between"><label htmlFor="cal">C<U>a</U>lendar:</label><Drop id="cal" className="w-80" /></div>
            <div className="flex items-center justify-between text-[#a5a5a5]"><label htmlFor="wbs"><U>W</U>BS code:</label><input id="wbs" type="text" disabled className="h-9 w-[322px] border-2 border-[#cacaca] bg-white" /></div>
            <div className="flex items-center justify-between"><label htmlFor="evm">Earned <U>v</U>alue method:</label><Drop id="evm" className="w-[242px]" /></div>
          </div>
          <div className="flex flex-col gap-4 pt-1">
            <Check id="effort">Eff<U>o</U>rt driven</Check>
            <Check id="ignore">Schedulin<U>g</U> ignores resource calendars</Check>
          </div>
        </div>
        <div className="mt-[17px]"><Check id="mile"><U>M</U>ark task as milestone</Check></div>
        <p className="mt-2">Some of the fields above are not editable because the task is Manually Scheduled.</p>
        <div className="mt-[49px] flex gap-[19px] pl-0.5">
          <button type="button" className="mr-auto h-9 w-[124px] border-2 border-[#b5b5b5] bg-[#e2e2e2]"><U>H</U>elp</button>
          <button type="button" className="h-9 w-[124px] border-[3px] border-[#1a74c8] bg-[#e2e2e2]">OK</button>
          <button type="button" className="h-9 w-[124px] border-2 border-[#b5b5b5] bg-[#e2e2e2]">Cancel</button>
        </div>
      </div>
    </div>
  );
}

/* ---------- status bar ---------- */
const viewIcons = [
  <Svg key="g" w={28} h={26}><path d="M1 1H27V25H1ZM1 5H27M8 5V25M1 12H8M1 18H8M12 13V9H24V11M12 12H16V16H12ZM18 18H23V22H18Z" /></Svg>,
  <Svg key="u" w={28} h={26}><path d="M27 14V1H1V24H8V5M1 5H27M1 12H8M1 18H8" /><path d="M11 16H27V25H11Z" /></Svg>,
  <Svg key="t" w={28} h={28}><path d="M27 8V1H1V24H4M1 5H27M7 5V18M1 11H7M1 18H7M11 12V8H17" /><circle cx="21" cy="13" r="4" /><circle cx="13" cy="18" r="4" /><path d="M8 28C9 21 17 21 18 28M20 19C23 16 26 18 27 22" /></Svg>,
  <Svg key="r" w={28} h={28}><path d="M27 8V1H1V24H4M1 8H18M10 1V18M19 1V6M1 17H7" /><circle cx="21" cy="13" r="4" /><circle cx="13" cy="18" r="4" /><path d="M8 28C9 21 17 21 18 28M20 19C23 16 26 18 27 22" /></Svg>,
  <Svg key="p" w={28} h={28}><rect x="3" y="1" width="22" height="26" /><path d="M0 7H6M0 20H6" /></Svg>,
];
const viewNames = ["Gantt chart", "Task usage", "Team planner", "Resource sheet", "Report"];

function StatusBar() {
  return (
    <footer className="flex h-[51px] shrink-0 items-stretch border-t-[3px] border-[#d1cecd]">
      <span className="flex w-[111px] shrink-0 items-center pl-[22px]">Busy</span>
      <Cell label="Macro recording">
        <Svg w={30} h={30}><path d="M12 26H1V1H28V12M1 5H28M5 10V22M9 11H11M13 11H15M9 16H11" /><circle cx="21" cy="21" r="7" /><circle cx="21" cy="21" r="3" fill={INK} /></Svg>
      </Cell>
      <button type="button" className="ml-[94px] flex items-center gap-1"><PinIcon w={28} h={28} color="#555" fill="none" />New Tasks : Manually Scheduled</button>
      <div className="ml-auto flex w-[543px] shrink-0 items-center">
        {viewIcons.map((ic, i) => (
          <button key={i} type="button" aria-label={viewNames[i]} className={`flex h-full w-[71px] shrink-0 items-center justify-center ${i === 0 ? "bg-[#d2cecd]" : ""}`}>{ic}</button>
        ))}
        <button type="button" aria-label="Zoom out" className="ml-3 h-0.5 w-[13px] shrink-0 bg-[#666]" />
        <div className="ml-2.5 flex flex-1 items-center">
          <input type="range" aria-label="Zoom" defaultValue="56" className="h-0.5 w-full appearance-none bg-[#777] [&::-webkit-slider-thumb]:h-[18px] [&::-webkit-slider-thumb]:w-[9px] [&::-webkit-slider-thumb]:appearance-none [&::-webkit-slider-thumb]:bg-[#777]" />
        </div>
      </div>
    </footer>
  );
}

const mark = "pointer-events-none absolute border-[9px] border-[#fb2a07] shadow-[3px_4px_6px_rgba(0,0,0,0.5),inset_3px_4px_6px_rgba(0,0,0,0.45)]";

export default function App() {
  return (
    <div className="relative flex h-screen flex-col overflow-hidden bg-[#f3f0ef] font-['Open_Sans','Noto_Sans',sans-serif] text-[19px] text-[#444]">
      <Tabs />
      <Ribbon />
      <QuickBar />
      <Timeline />
      <div className="h-[7px] shrink-0 border-y border-[#c4c4c4] bg-[#e9e9e9]" />
      <main className="flex min-h-0 flex-1">
        <SideLabel className="text-[#2f7d32]">GANTT CHART</SideLabel>
        <div className="flex w-[1244px] shrink-0 flex-col">
          <div className="min-h-0 flex-1 overflow-hidden"><TaskTable /></div>
          <div className="flex h-[30px] shrink-0 items-center bg-[#f0f0f0] px-1">
            <ScrollButton left label="Scroll table left" />
            <span className="mr-auto h-[26px] w-[816px] border-2 border-[#777] bg-white" />
            <ScrollButton label="Scroll table right" />
          </div>
        </div>
        <div className="w-[7px] shrink-0 border-r-2 border-l-2 border-r-[#bbb] border-l-white bg-[#e6e6e6]" />
        <ChartPane />
      </main>
      <StatusBar />
      <Dialog />
      <div className={`${mark} top-0 left-[82px] h-[60px] w-[102px]`} />
      <div className={`${mark} top-12 left-[1972px] h-[178px] w-[166px]`} />
      <div className={`${mark} top-[578px] left-[775px] h-[81px] w-[550px]`} />
      <svg className="pointer-events-none absolute top-[490px] left-20 drop-shadow-[2px_4px_3px_rgba(0,0,0,0.45)]" width="220" height="180" viewBox="80 490 220 180" aria-hidden="true">
        <path d="M86 497L122 503L116 513L290 656L282 664L107 523L101 532Z" fill="#fb5b4b" />
      </svg>
    </div>
  );
}
